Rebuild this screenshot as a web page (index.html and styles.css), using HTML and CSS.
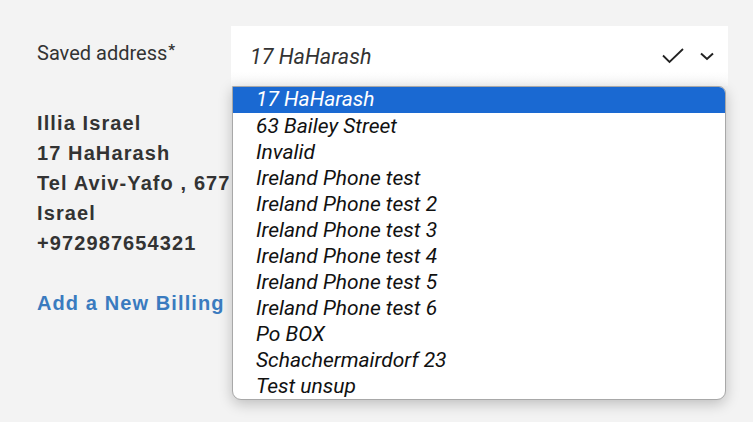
FILE: index.html
```html
<!DOCTYPE html>
<html lang="en">
<head>
    <meta charset="UTF-8">
    <title>Billing Address</title>
    <link rel="stylesheet" href="styles.css">
</head>
<body>
    <div class="form">
        <div class="field">
            <label class="label">Saved address<span class="req">*</span></label>
            <div class="select-wrap">
                <div class="select">
                    <span class="select-value">17 HaHarash</span>
                    <svg class="icon-check" width="22" height="16" viewBox="0 0 22 16">
                        <path d="M1 7.5 L7.5 14 L21 1" fill="none" stroke="#222" stroke-width="1.8"/>
                    </svg>
                    <svg class="icon-chevron" width="14" height="9" viewBox="0 0 14 9">
                        <path d="M1 1.5 L7 7 L13 1.5" fill="none" stroke="#222" stroke-width="2"/>
                    </svg>
                </div>
                <ul class="options">
                    <li class="selected">17 HaHarash</li>
                    <li>63 Bailey Street</li>
                    <li>Invalid</li>
                    <li>Ireland Phone test</li>
                    <li>Ireland Phone test 2</li>
                    <li>Ireland Phone test 3</li>
                    <li>Ireland Phone test 4</li>
                    <li>Ireland Phone test 5</li>
                    <li>Ireland Phone test 6</li>
                    <li>Po BOX</li>
                    <li>Schachermairdorf 23</li>
                    <li>Test unsup</li>
                </ul>
            </div>
        </div>

        <!-- left column is covered by the open list, so clip it at the list edge -->
        <div class="details">
            <div class="address">
                <div>Illia Israel</div>
                <div>17 HaHarash</div>
                <div>Tel Aviv-Yafo , 677</div>
                <div>Israel</div>
                <div>+972987654321</div>
            </div>

            <a class="add-link" href="#">Add a New Billing</a>
        </div>
    </div>
</body>
</html>
```

FILE: styles.css
```css
html, body {
    height: 100%;
}

body {
    margin: 0;
    background-color: #f3f3f3;
    font-family: 'Liberation Sans', Arial, sans-serif;
    color: #333333;
}

.form {
    min-height: 422px;
    box-sizing: border-box;
    padding: 26px 0 0 37px;
}

.field {
    position: relative;
    z-index: 1;
    display: flex;
    align-items: flex-start;
}

.label {
    width: 194px;
    font-family: Roboto, sans-serif;
    font-size: 20px;
    line-height: 48px;
    color: #333333;
}

.req {
    font-size: 15px;
    font-weight: bold;
    vertical-align: 5px;
    margin-left: 1px;
}

.select-wrap {
    position: relative;
    width: 497px;
}

.select {
    display: flex;
    align-items: center;
    height: 60px;
    padding: 0 14px 0 19px;
    background: linear-gradient(#ffffff 75%, #f7f7f7);
}

.select-value {
    flex: 1;
    font-family: Roboto, sans-serif;
    font-style: italic;
    font-size: 21.5px;
    color: #333333;
}

.icon-check {
    margin-right: 16px;
}

.options {
    position: absolute;
    top: 60px;
    left: 1px;
    width: 492px;
    margin: 0;
    padding: 0;
    list-style: none;
    background-color: #ffffff;
    border: 1px solid #a8a8a8;
    border-radius: 0 7px 9px 9px;
    box-shadow: 0 4px 14px rgba(0, 0, 0, 0.22);
    overflow: hidden;
}

.options li {
    height: 26px;
    line-height: 26px;
    padding-left: 23px;
    font-family: Roboto, sans-serif;
    font-style: italic;
    font-size: 21px;
    color: #111111;
}

.options li.selected {
    background-color: #1a69d2;
    color: #ffffff;
    line-height: 25px;
}

.details {
    width: 195px;
    overflow: hidden;
    white-space: nowrap;
}

.address {
    margin-top: 22px;
    font-size: 20px;
    font-weight: bold;
    line-height: 30px;
    letter-spacing: 1.1px;
    color: #333333;
}

.add-link {
    display: inline-block;
    margin-top: 34px;
    font-size: 20px;
    font-weight: bold;
    letter-spacing: 1.1px;
    color: #3a7bbf;
    text-decoration: none;
}
```
